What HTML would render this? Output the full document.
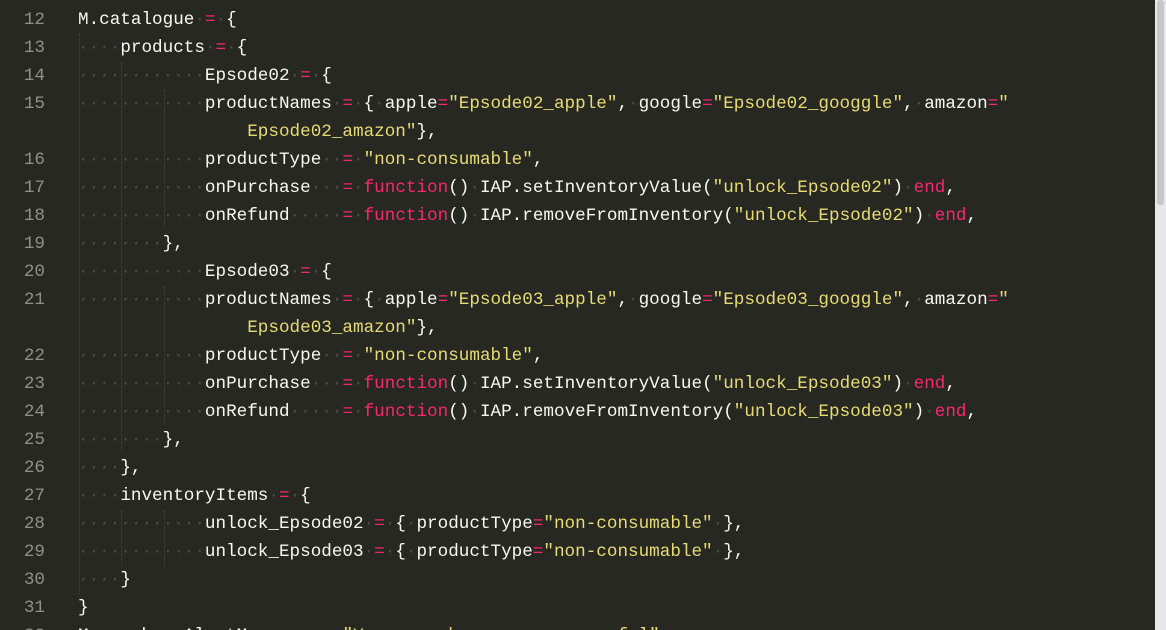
<!DOCTYPE html><html><head><style>
html,body{margin:0;width:1166px;height:630px;overflow:hidden}
body{background:#272822;position:relative;font-family:"Liberation Mono",monospace;font-size:17.64px;}
.l{position:absolute;left:0;height:28px;line-height:28px;white-space:pre;color:#f8f8f2}
.n{position:absolute;left:0;width:45px;text-align:right;color:#90908a}
.c{position:absolute;left:78px}
.d{color:#4b4b42}.p{color:#f92672}.y{color:#e6db74}
.g{position:absolute;width:0;border-left:1px dotted #45453d}
.sb{position:absolute;left:1155px;top:0;width:11px;height:630px;background:#e8e8e8}
.sb div{position:absolute;left:2px;top:0;width:7px;height:205px;background:#c8c8c8;border-radius:3px}
</style></head><body>
<div class="g" style="left:79px;top:34px;height:560px"></div>
<div class="g" style="left:121px;top:62px;height:390px"></div>
<div class="g" style="left:121px;top:510px;height:56px"></div>
<div class="g" style="left:164px;top:90px;height:138px"></div>
<div class="g" style="left:164px;top:286px;height:138px"></div>
<div class="g" style="left:164px;top:510px;height:56px"></div>
<div class="l" style="top:6px"><span class="n">12</span><span class="c">M.catalogue<span class="d">·</span><span class="p">=</span><span class="d">·</span>{</span></div>
<div class="l" style="top:34px"><span class="n">13</span><span class="c"><span class="d">····</span>products<span class="d">·</span><span class="p">=</span><span class="d">·</span>{</span></div>
<div class="l" style="top:62px"><span class="n">14</span><span class="c"><span class="d">············</span>Epsode02<span class="d">·</span><span class="p">=</span><span class="d">·</span>{</span></div>
<div class="l" style="top:90px"><span class="n">15</span><span class="c"><span class="d">············</span>productNames<span class="d">·</span><span class="p">=</span><span class="d">·</span>{<span class="d">·</span>apple<span class="p">=</span><span class="y">"Epsode02_apple"</span>,<span class="d">·</span>google<span class="p">=</span><span class="y">"Epsode02_googgle"</span>,<span class="d">·</span>amazon<span class="p">=</span><span class="y">"</span></span></div>
<div class="l" style="top:118px"><span class="c">                <span class="y">Epsode02_amazon"</span>},</span></div>
<div class="l" style="top:146px"><span class="n">16</span><span class="c"><span class="d">············</span>productType<span class="d">··</span><span class="p">=</span><span class="d">·</span><span class="y">"non-consumable"</span>,</span></div>
<div class="l" style="top:174px"><span class="n">17</span><span class="c"><span class="d">············</span>onPurchase<span class="d">···</span><span class="p">=</span><span class="d">·</span><span class="p">function</span>()<span class="d">·</span>IAP.setInventoryValue(<span class="y">"unlock_Epsode02"</span>)<span class="d">·</span><span class="p">end</span>,</span></div>
<div class="l" style="top:202px"><span class="n">18</span><span class="c"><span class="d">············</span>onRefund<span class="d">·····</span><span class="p">=</span><span class="d">·</span><span class="p">function</span>()<span class="d">·</span>IAP.removeFromInventory(<span class="y">"unlock_Epsode02"</span>)<span class="d">·</span><span class="p">end</span>,</span></div>
<div class="l" style="top:230px"><span class="n">19</span><span class="c"><span class="d">········</span>},</span></div>
<div class="l" style="top:258px"><span class="n">20</span><span class="c"><span class="d">············</span>Epsode03<span class="d">·</span><span class="p">=</span><span class="d">·</span>{</span></div>
<div class="l" style="top:286px"><span class="n">21</span><span class="c"><span class="d">············</span>productNames<span class="d">·</span><span class="p">=</span><span class="d">·</span>{<span class="d">·</span>apple<span class="p">=</span><span class="y">"Epsode03_apple"</span>,<span class="d">·</span>google<span class="p">=</span><span class="y">"Epsode03_googgle"</span>,<span class="d">·</span>amazon<span class="p">=</span><span class="y">"</span></span></div>
<div class="l" style="top:314px"><span class="c">                <span class="y">Epsode03_amazon"</span>},</span></div>
<div class="l" style="top:342px"><span class="n">22</span><span class="c"><span class="d">············</span>productType<span class="d">··</span><span class="p">=</span><span class="d">·</span><span class="y">"non-consumable"</span>,</span></div>
<div class="l" style="top:370px"><span class="n">23</span><span class="c"><span class="d">············</span>onPurchase<span class="d">···</span><span class="p">=</span><span class="d">·</span><span class="p">function</span>()<span class="d">·</span>IAP.setInventoryValue(<span class="y">"unlock_Epsode03"</span>)<span class="d">·</span><span class="p">end</span>,</span></div>
<div class="l" style="top:398px"><span class="n">24</span><span class="c"><span class="d">············</span>onRefund<span class="d">·····</span><span class="p">=</span><span class="d">·</span><span class="p">function</span>()<span class="d">·</span>IAP.removeFromInventory(<span class="y">"unlock_Epsode03"</span>)<span class="d">·</span><span class="p">end</span>,</span></div>
<div class="l" style="top:426px"><span class="n">25</span><span class="c"><span class="d">········</span>},</span></div>
<div class="l" style="top:454px"><span class="n">26</span><span class="c"><span class="d">····</span>},</span></div>
<div class="l" style="top:482px"><span class="n">27</span><span class="c"><span class="d">····</span>inventoryItems<span class="d">·</span><span class="p">=</span><span class="d">·</span>{</span></div>
<div class="l" style="top:510px"><span class="n">28</span><span class="c"><span class="d">············</span>unlock_Epsode02<span class="d">·</span><span class="p">=</span><span class="d">·</span>{<span class="d">·</span>productType<span class="p">=</span><span class="y">"non-consumable"</span><span class="d">·</span>},</span></div>
<div class="l" style="top:538px"><span class="n">29</span><span class="c"><span class="d">············</span>unlock_Epsode03<span class="d">·</span><span class="p">=</span><span class="d">·</span>{<span class="d">·</span>productType<span class="p">=</span><span class="y">"non-consumable"</span><span class="d">·</span>},</span></div>
<div class="l" style="top:566px"><span class="n">30</span><span class="c"><span class="d">····</span>}</span></div>
<div class="l" style="top:594px"><span class="n">31</span><span class="c">}</span></div>
<div class="l" style="top:622px"><span class="n">32</span><span class="c">M.purchaseAlertMessage<span class="d">·</span><span class="p">=</span><span class="d">·</span><span class="y">"Your purchase was successful"</span></span></div>
<div class="sb"><div></div></div>
</body></html>
